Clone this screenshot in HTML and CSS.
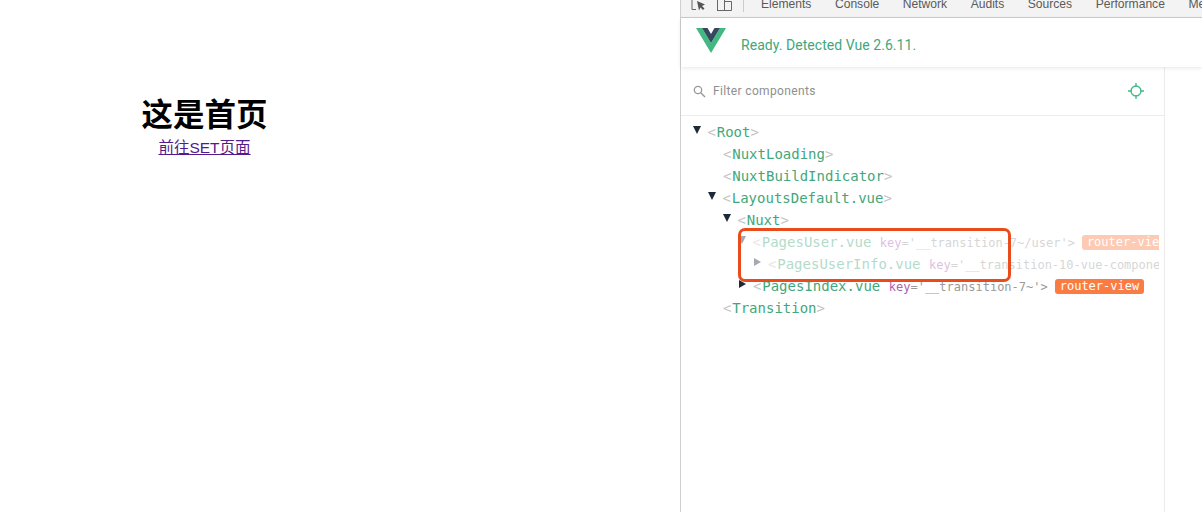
FILE: index.html
```html
<!DOCTYPE html>
<html lang="zh">
<head>
<meta charset="utf-8">
<title>首页</title>
<link rel="stylesheet" href="styles.css">
</head>
<body>
<div class="app">
  <main class="page">
    <h1 class="title">这是首页</h1>
    <a class="link" href="#">前往SET页面</a>
  </main>
  <section class="devtools">
    <nav class="tabs">
      <svg class="tool" width="16" height="12" viewBox="0 0 16 12"><path d="M1 0v9.500h4" fill="none" stroke="#666"/><path d="M6 1l8 3.500-3 1.500 2.500 2.500-1.500 1.500-2.500-2.500-1.500 3z" fill="#555"/></svg>
      <svg class="tool tool-device" width="16" height="12" viewBox="0 0 16 12"><path d="M7.500 1.500h7v9h-7" fill="none" stroke="#666"/><rect x=".5" y="-1" width="7" height="11.500" fill="none" stroke="#666"/></svg>
      <span class="sep"></span>
      <span class="tab">Elements</span>
      <span class="tab">Console</span>
      <span class="tab">Network</span>
      <span class="tab">Audits</span>
      <span class="tab">Sources</span>
      <span class="tab">Performance</span>
      <span class="tab">Memory</span>
    </nav>
    <header class="status">
      <svg class="logo" width="30" height="26" viewBox="0 0 30 26"><path d="M0 1h6l9 15 9-15h6L15 26z" fill="#42b983"/><path d="M6 1h5.500L15 7l3.500-6H24l-9 15z" fill="#35495e"/></svg>
      <span class="ready">Ready. Detected Vue 2.6.11.</span>
    </header>
    <div class="panes">
      <div class="tree-pane">
        <div class="filter">
          <svg class="search" width="13" height="13" viewBox="0 0 13 13"><circle cx="5" cy="5" r="3.700" fill="none" stroke="#999" stroke-width="1.300"/><path d="M8 8l4 4" stroke="#999" stroke-width="1.500"/></svg>
          <span class="filter-text">Filter components</span>
          <svg class="target" width="16" height="16" viewBox="0 0 16 16"><circle cx="8" cy="8" r="5" fill="none" stroke="#42b983" stroke-width="1.300"/><path d="M8 0v4M8 12v4M0 8h4M12 8h4" stroke="#42b983" stroke-width="1.300"/></svg>
        </div>
        <div class="tree">
          <div class="row"><span class="arrow down"></span><span class="br">&lt;</span><span class="name">Root</span><span class="br">&gt;</span></div>
          <div class="row d1"><span class="br">&lt;</span><span class="name">NuxtLoading</span><span class="br">&gt;</span></div>
          <div class="row d1"><span class="br">&lt;</span><span class="name">NuxtBuildIndicator</span><span class="br">&gt;</span></div>
          <div class="row d1"><span class="arrow down"></span><span class="br">&lt;</span><span class="name">LayoutsDefault.vue</span><span class="br">&gt;</span></div>
          <div class="row d2"><span class="arrow down"></span><span class="br">&lt;</span><span class="name">Nuxt</span><span class="br">&gt;</span></div>
          <div class="row d3 faded"><span class="arrow down"></span><span class="br">&lt;</span><span class="name">PagesUser.vue</span><span class="attr"><span class="key">key</span>='__transition-7~/user'&gt;</span><span class="badge">router-view</span></div>
          <div class="row d4 faded"><span class="arrow right"></span><span class="br">&lt;</span><span class="name">PagesUserInfo.vue</span><span class="attr"><span class="key">key</span>='__transition-10-vue-component-5-PagesUserInfo'&gt;</span></div>
          <div class="row d3"><span class="arrow right"></span><span class="br">&lt;</span><span class="name">PagesIndex.vue</span><span class="attr"><span class="key">key</span>='__transition-7~'&gt;</span><span class="badge">router-view</span></div>
          <div class="row d1"><span class="br">&lt;</span><span class="name">Transition</span><span class="br">&gt;</span></div>
          <div class="highlight"></div>
        </div>
      </div>
      <aside class="side"></aside>
    </div>
  </section>
</div>
</body>
</html>
```
FILE: styles.css
```css
html, body {
  margin: 0;
  height: 100%;
  background: #fff;
  overflow: hidden;
}
.app {
  display: flex;
  height: 512px;
}
.page {
  width: 409px;
  padding-top: 92px;
  text-align: center;
  font-family: "Noto Sans CJK SC", "Liberation Sans", sans-serif;
  flex: none;
}
.title {
  margin: 0;
  font-size: 31.500px;
  line-height: 40px;
  font-weight: 700;
  color: #000;
}
.link {
  display: block;
  font-family: "Liberation Sans", "Noto Sans CJK SC", sans-serif;
  font-size: 15.500px;
  line-height: 26px;
  margin-top: 3px;
  color: #551a8b;
  text-decoration: underline;
}
.devtools {
  margin-left: 271px;
  width: 521px;
  flex: none;
  border-left: 1px solid #cfcfcf;
  display: flex;
  flex-direction: column;
  font-family: Roboto, sans-serif;
}
.tabs {
  height: 17px;
  flex: none;
  display: flex;
  align-items: flex-end;
  background: #f3f3f3;
  border-bottom: 1px solid #cdcdcd;
  overflow: hidden;
  white-space: nowrap;
  padding-left: 10px;
  font-family: "Liberation Sans", sans-serif;
  font-size: 12.100px;
  color: #5a5a5a;
}
.tool {
  flex: none;
  margin: 0 10px 5px 0;
}
.tool-device {
  margin-right: 10px;
}
.sep {
  flex: none;
  width: 1px;
  height: 12px;
  margin: 0 17px 5px 0;
  background: #ccc;
}
.tab {
  flex: none;
  margin-right: 23.500px;
  line-height: 18px;
  margin-bottom: 4px;
}
.status {
  height: 49px;
  flex: none;
  display: flex;
  align-items: center;
  position: relative;
  padding-left: 15px;
  box-shadow: 0 1px 4px rgba(0, 0, 0, .1);
}
.logo {
  flex: none;
  margin: -5px 15px 0 0;
}
.ready {
  color: #42a77c;
  font-size: 14px;
  letter-spacing: .05px;
  margin-top: 5px;
}
.panes {
  flex: 1;
  display: flex;
  min-height: 0;
}
.tree-pane {
  width: 483px;
  flex: none;
  border-right: 1px solid #ececec;
}
.filter {
  height: 48px;
  display: flex;
  align-items: center;
  padding: 0 20px 0 12px;
  border-bottom: 1px solid #ececec;
}
.search {
  flex: none;
  margin-right: 7px;
}
.filter-text {
  flex: 1;
  font-size: 12px;
  letter-spacing: .35px;
  color: #8f8f8f;
}
.target {
  flex: none;
}
.tree {
  position: relative;
  padding-top: 5px;
  font-family: "DejaVu Sans Mono", monospace;
  font-size: 14px;
}
.row {
  height: 22px;
  line-height: 22px;
  display: flex;
  align-items: center;
  padding-left: 27px;
  width: 478px;
  box-sizing: border-box;
  overflow: hidden;
  white-space: nowrap;
  position: relative;
}
.d1 { padding-left: 42px; }
.d2 { padding-left: 57px; }
.d3 { padding-left: 72px; }
.d4 { padding-left: 87px; }
.faded > * { opacity: .4; }
.br { color: #c4c4c4; }
.br:not(:last-child) { margin-right: .8px; }
.name { color: #42a77c; }
.attr {
  flex: none;
  margin: 1px 0 0 8.500px;
  font-size: 12px;
  color: #9a9a9a;
}
.key { color: #b05fb5; }
.badge {
  flex: none;
  margin-left: 7px;
  padding: 0 5px;
  height: 15px;
  line-height: 15px;
  border-radius: 3px;
  font-size: 12px;
  color: #fff;
  background: #fb7c43;
}
.arrow {
  flex: none;
  width: 0;
  height: 0;
  margin-top: -4px;
}
.down {
  border-left: 4.500px solid transparent;
  border-right: 4.500px solid transparent;
  border-top: 8px solid #1c2a38;
  margin-left: -15px;
  margin-right: 6.500px;
}
.right {
  border-top: 4.500px solid transparent;
  border-bottom: 4.500px solid transparent;
  border-left: 7px solid #1c2a38;
  margin-left: -14px;
  margin-right: 7px;
}
.highlight {
  position: absolute;
  left: 57px;
  top: 112px;
  width: 267px;
  height: 48px;
  border: 3px solid #e94b1b;
  border-radius: 7px;
}
.side {
  flex: 1;
}
```
